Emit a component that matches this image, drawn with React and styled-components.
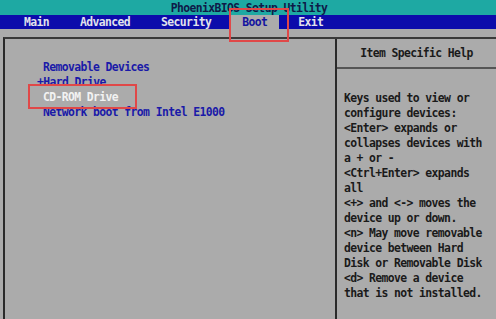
import styled, { createGlobalStyle } from "styled-components";

const GlobalStyle = createGlobalStyle`
  html, body {
    margin: 0;
    padding: 0;
    background: #ababab;
    overflow: hidden;
  }
`;

const menu = [
  { label: "Main" },
  { label: "Advanced" },
  { label: "Security" },
  { label: "Boot", active: true },
  { label: "Exit" },
];

const devices = [
  { label: "Removable Devices" },
  { label: "Hard Drive", marker: "+" },
  { label: "CD-ROM Drive", selected: true },
  { label: "Network boot from Intel E1000" },
];

const help = [
  "Keys used to view or",
  "configure devices:",
  "<Enter> expands or",
  "collapses devices with",
  "a + or -",
  "<Ctrl+Enter> expands",
  "all",
  "<+> and <-> moves the",
  "device up or down.",
  "<n> May move removable",
  "device between Hard",
  "Disk or Removable Disk",
  "<d> Remove a device",
  "that is not installed.",
];

export default function App() {
  return (
    <>
      <GlobalStyle />
      <Screen>
        <TitleBar>PhoenixBIOS Setup Utility</TitleBar>
        <MenuBar>
          {menu.map((m) => (
            <MenuItem key={m.label} $active={m.active}>
              {m.label}
            </MenuItem>
          ))}
        </MenuBar>
        <Body>
          <Frame>
            <LeftPanel>
              {devices.map((d) => (
                <Device key={d.label} $selected={d.selected}>
                  {d.marker && <Marker>{d.marker}</Marker>}
                  {d.label}
                </Device>
              ))}
            </LeftPanel>
            <RightPanel>
              <HelpHeader>Item Specific Help</HelpHeader>
              <HelpText>
                {help.map((line, i) => (
                  <HelpLine key={i}>{line}</HelpLine>
                ))}
              </HelpText>
            </RightPanel>
          </Frame>
        </Body>
        <Callout style={{ left: 229, top: 8, width: 60, height: 34 }} />
        <Callout style={{ left: 28, top: 84, width: 109, height: 25 }} />
      </Screen>
    </>
  );
}

const Screen = styled.div`
  position: relative;
  width: 496px;
  height: 319px;
  display: flex;
  flex-direction: column;
  background: #ababab;
  font-family: "DejaVu Sans Mono", "Liberation Mono", monospace;
  font-size: 11.4px;
  letter-spacing: -0.6px;
  font-weight: bold;
  overflow: hidden;
`;

const TitleBar = styled.div`
  height: 15px;
  line-height: 16px;
  background: #1ea9a3;
  color: #0e1a48;
  text-align: center;
  padding-left: 2px;
`;

const MenuBar = styled.div`
  height: 14px;
  display: flex;
  gap: 7px;
  padding-left: 12px;
  background: #0c0cab;
`;

const MenuItem = styled.div`
  padding: 0 12px;
  line-height: 14px;
  color: ${(p) => (p.$active ? "#1414a0" : "#e2e2ec")};
  background: ${(p) => (p.$active ? "#ababab" : "transparent")};
`;

const Body = styled.div`
  flex: 1;
  padding: 8px 0 0 3px;
  display: flex;
`;

const Frame = styled.div`
  flex: 1;
  display: grid;
  grid-template-columns: 332px 1fr;
  border-top: 2px solid #3a3a3a;
  border-left: 2px solid #2a2a2a;
`;

const LeftPanel = styled.div`
  padding: 21px 0 0 38px;
  border-right: 2px solid #2a2a2a;
`;

const Device = styled.div`
  line-height: 15px;
  color: ${(p) => (p.$selected ? "#f2f2f2" : "#1a1aa8")};
`;

const Marker = styled.span`
  margin-left: -6px;
`;

const RightPanel = styled.div`
  display: flex;
  flex-direction: column;
`;

const HelpHeader = styled.div`
  height: 28px;
  line-height: 28px;
  text-align: center;
  color: #1a1a1a;
  border-bottom: 2px solid #555;
`;

const HelpText = styled.div`
  padding: 22px 0 0 7px;
  color: #1a1a1a;
`;

const HelpLine = styled.div`
  line-height: 15px;
  white-space: pre;
`;

const Callout = styled.div`
  position: absolute;
  box-sizing: border-box;
  border: 2px solid #e04848;
  pointer-events: none;
`;
